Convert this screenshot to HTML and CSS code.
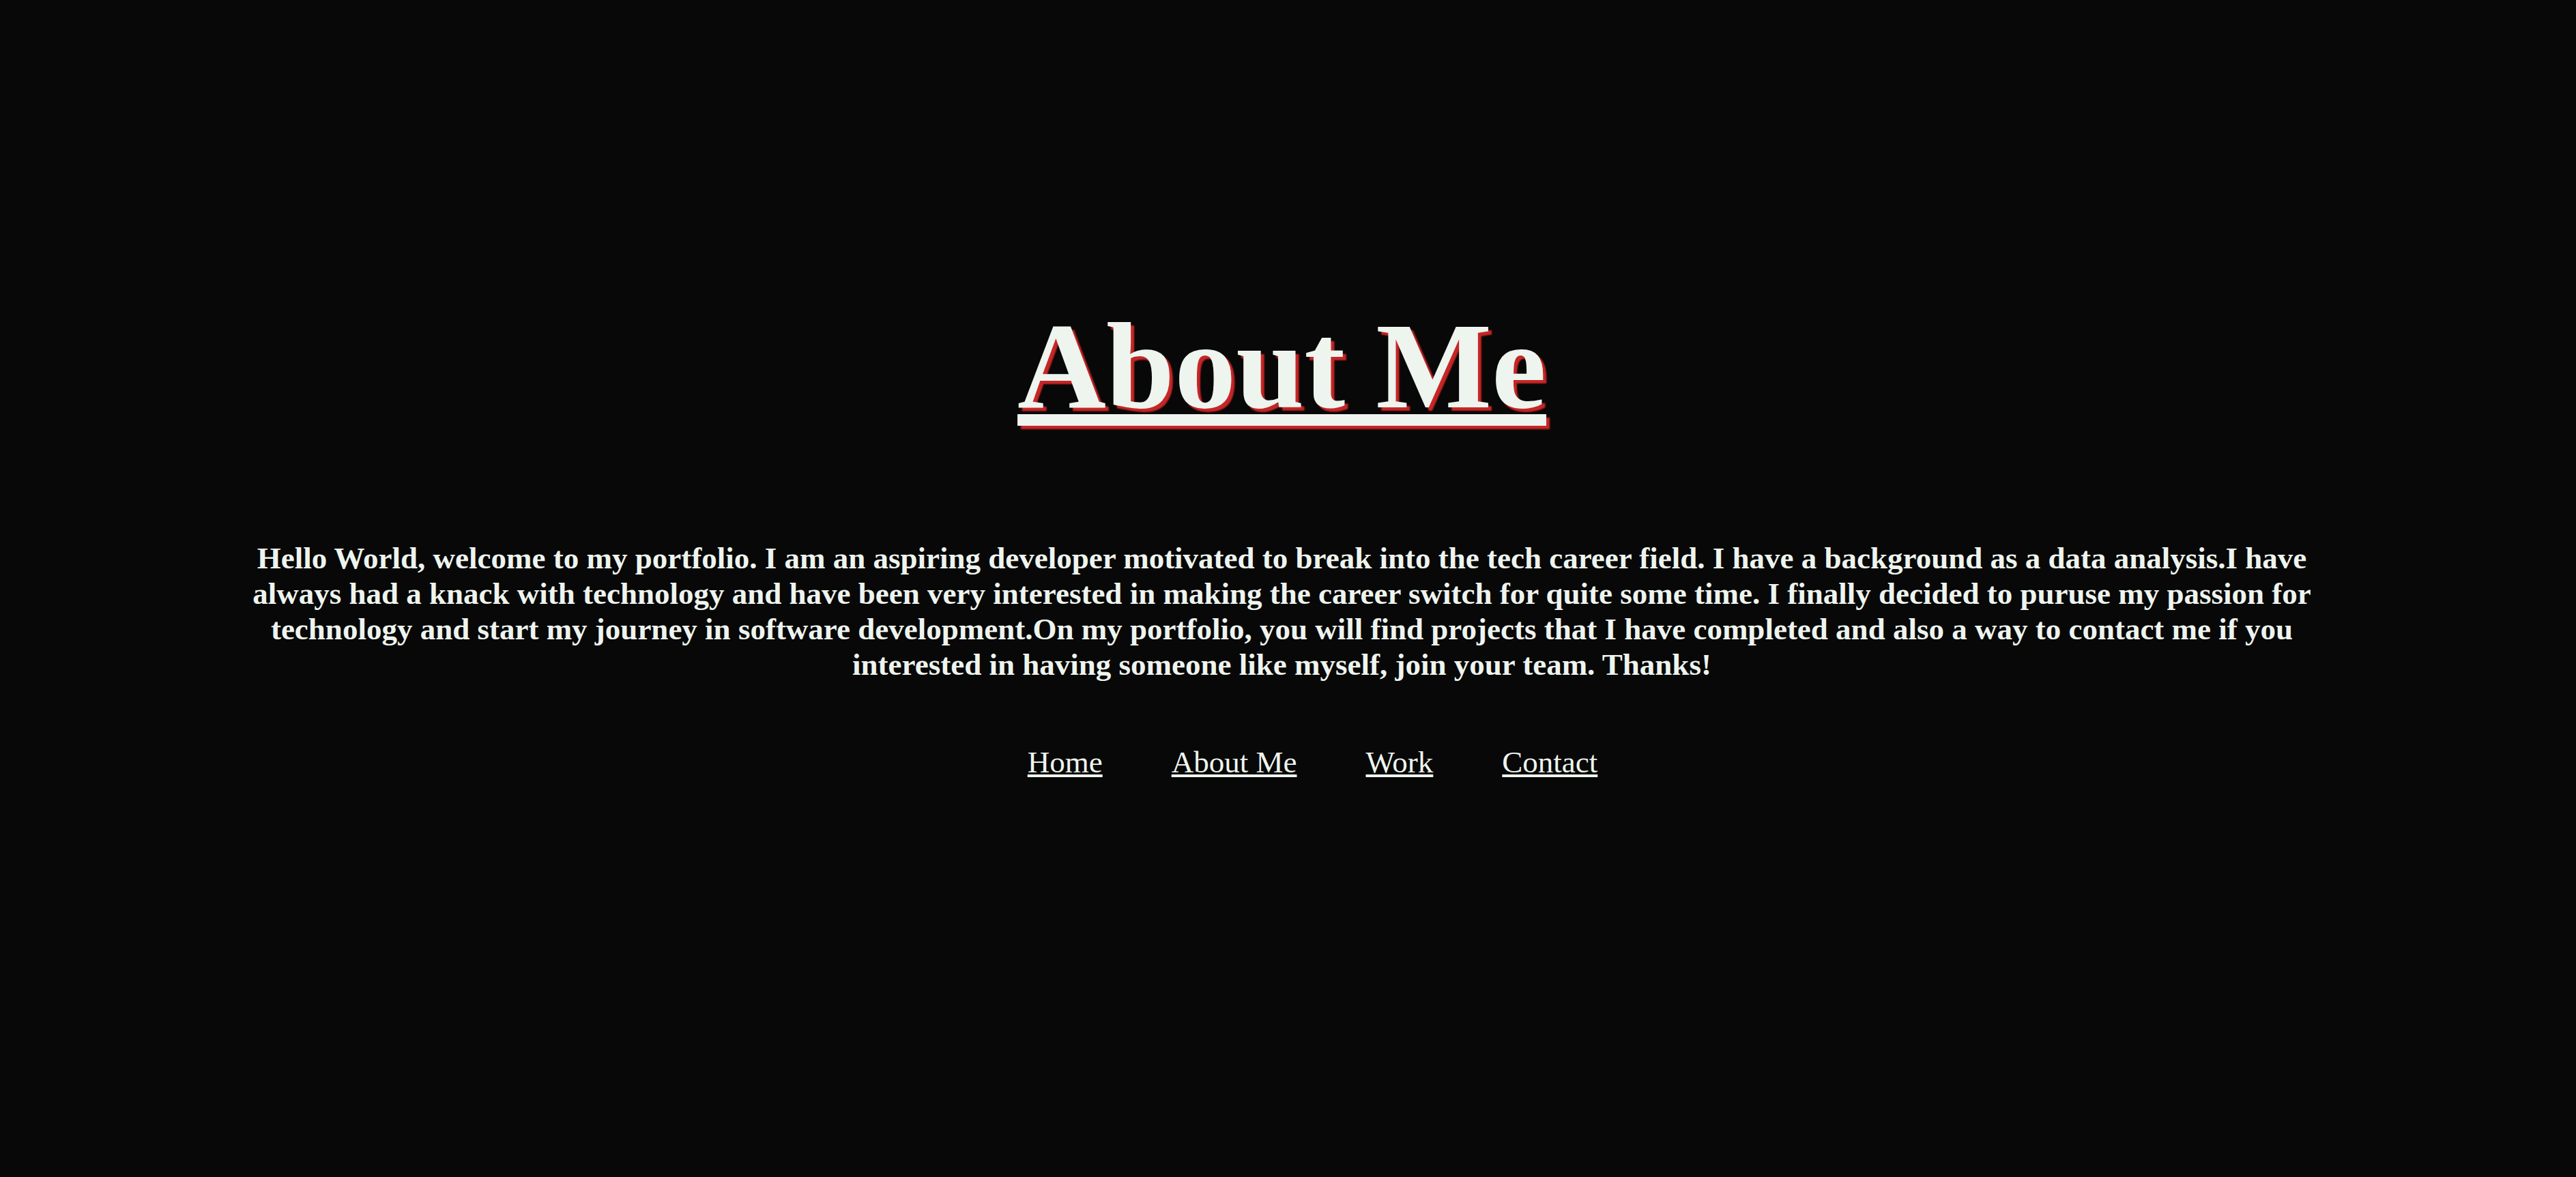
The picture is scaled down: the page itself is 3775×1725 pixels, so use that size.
FILE: index.html
```html
<!DOCTYPE html>
<html lang="en">
<head>
<meta charset="utf-8">
<title>About Me</title>
<link rel="stylesheet" href="styles.css">
</head>
<body>
<main class="page">
  <h1 class="title">About Me</h1>
  <p class="intro">Hello World, welcome to my portfolio. I am an aspiring developer motivated to break into the tech career field. I have a background as a data analysis.I have always had a knack with technology and have been very interested in making the career switch for quite some time. I finally decided to puruse my passion for technology and start my journey in software development.On my portfolio, you will find projects that I have completed and also a way to contact me if you interested in having someone like myself, join your team. Thanks!</p>
  <nav class="nav">
    <a href="#" class="nav-link">Home</a>
    <a href="#" class="nav-link">About Me</a>
    <a href="#" class="nav-link">Work</a>
    <a href="#" class="nav-link">Contact</a>
  </nav>
</main>
</body>
</html>
```
FILE: styles.css
```css
html, body {
  margin: 0;
  padding: 0;
  background: #080808;
  height: 100%;
}

body {
  font-family: "Liberation Serif", "Times New Roman", serif;
  color: #eef4ee;
}

.page {
  display: flex;
  flex-direction: column;
  align-items: center;
  padding: 433px 18px 0 0;
  min-height: 100%;
  box-sizing: border-box;
}

.title {
  margin: 0;
  font-size: 180px;
  font-weight: bold;
  line-height: normal;
  text-decoration: underline;
  text-decoration-thickness: 17px;
  text-underline-offset: 10px;
  text-decoration-skip-ink: none;
  text-shadow: 5px 5px 2px #c82626;
}

.intro {
  margin: 152px 0 0 0;
  width: 3030px;
  font-size: 45px;
  font-weight: bold;
  line-height: normal;
  text-align: center;
}

.nav {
  display: flex;
  gap: 101px;
  margin-top: 91px;
  padding-left: 90px;
}

.nav-link {
  color: #eef4ee;
  font-size: 45px;
  line-height: normal;
  text-decoration: underline;
}
```
